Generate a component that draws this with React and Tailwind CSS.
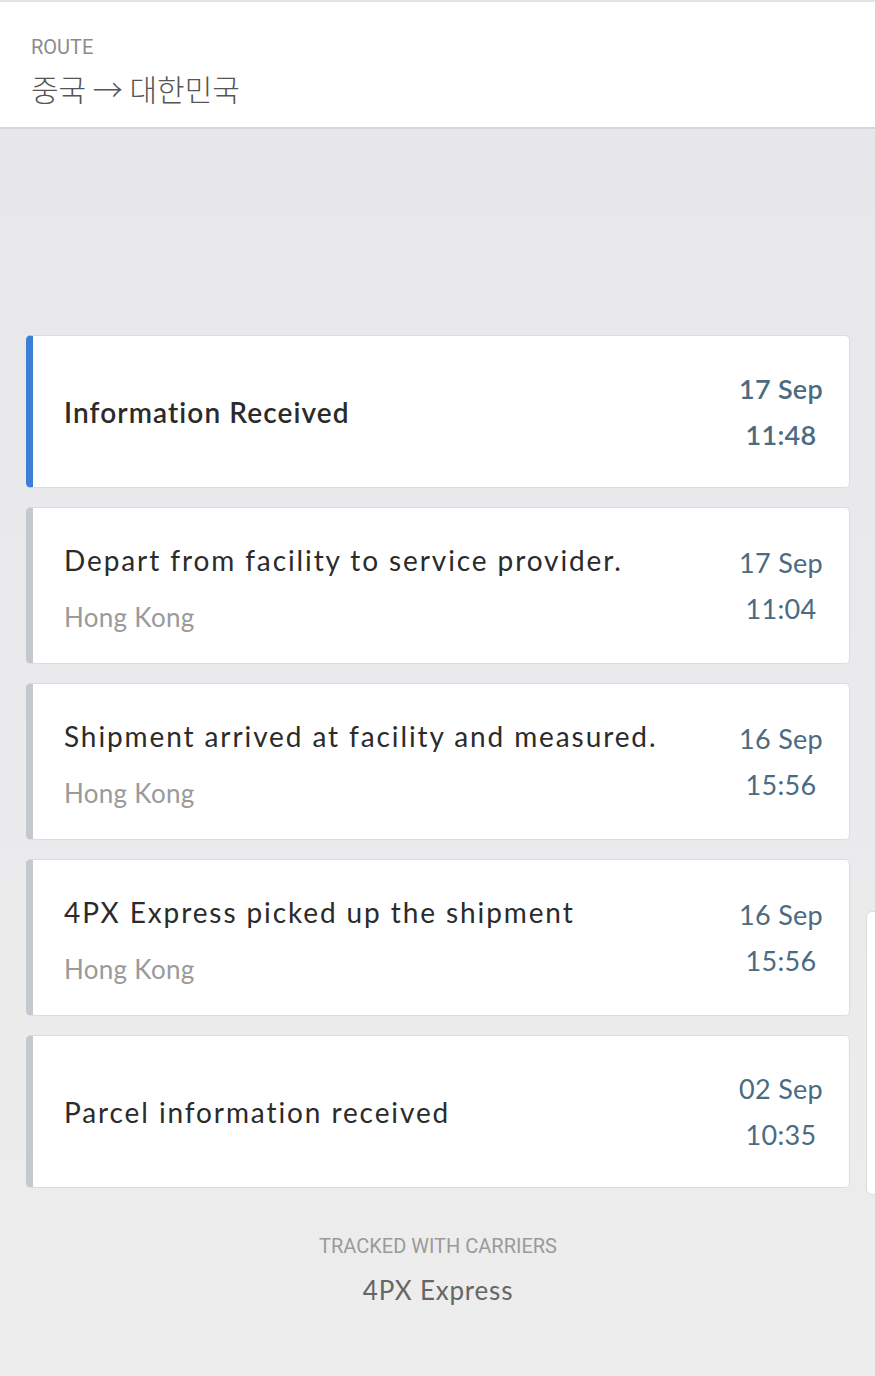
const events = [
  { title: "Information Received", place: null, date: "17 Sep", time: "11:48", active: true },
  { title: "Depart from facility to service provider.", place: "Hong Kong", date: "17 Sep", time: "11:04" },
  { title: "Shipment arrived at facility and measured.", place: "Hong Kong", date: "16 Sep", time: "15:56" },
  { title: "4PX Express picked up the shipment", place: "Hong Kong", date: "16 Sep", time: "15:56" },
  { title: "Parcel information received", place: null, date: "02 Sep", time: "10:35" },
];

const EventCard = ({ ev }) => (
  <div
    className={`flex items-center rounded-[5px] bg-white border border-[#dcdcdc] border-l-[7px] ${
      ev.active ? "border-l-[#3b80d6]" : "border-l-[#c3c9ce]"
    } ${ev.place ? "h-[157px]" : "h-[153px]"}`}
  >
    <div className={`flex-1 pl-[31px] ${ev.place ? "pt-[4px]" : ""}`}>
      <div
        className={`text-[28px] leading-[36px] text-[#2b2b2b] ${
          ev.active ? "font-semibold tracking-[1.1px]" : "tracking-[1.9px]"
        }`}
      >
        {ev.title}
      </div>
      {ev.place && <div className="mt-[22px] text-[26px] leading-[34px] tracking-[0.3px] text-[#9a9a9a]">{ev.place}</div>}
    </div>
    <div
      className={`w-[136px] text-center text-[27px] leading-[46px] tracking-[0.3px] text-[#4b6b82] ${ev.active ? "font-semibold" : ""}`}
    >
      <div>{ev.date}</div>
      <div>{ev.time}</div>
    </div>
  </div>
);

export default function App() {
  return (
    <div className="relative min-h-[1376px] overflow-hidden bg-gradient-to-b from-[#e7e7eb] to-[#ededed]" style={{ fontFamily: "Lato, 'Noto Sans', sans-serif" }}>
      <header className="h-[129px] bg-white border-t-2 border-t-[#e4e4e4] border-b-2 border-b-[#d6d6da] px-[31px] pt-[32px]">
        <div className="text-[20px] leading-[26px] text-[#8c8c8c]" style={{ fontFamily: "Roboto, sans-serif" }}>
          ROUTE
        </div>
        <div
          className="mt-[8px] text-[30px] leading-[40px] text-[#555] font-light"
          style={{ fontFamily: "'Noto Sans CJK KR', sans-serif" }}
        >
          중국 → 대한민국
        </div>
      </header>

      <main className="px-[26px] pt-[206px] pr-[25px]">
        <div className="flex flex-col gap-[19px]">
          {events.map((ev, i) => (
            <EventCard key={i} ev={ev} />
          ))}
        </div>

        <div className="mt-[45px] text-center">
          <div className="text-[20px] leading-[26px] text-[#9a9a9a]" style={{ fontFamily: "Roboto, sans-serif" }}>
            TRACKED WITH CARRIERS
          </div>
          <div className="mt-[15px] text-[26px] leading-[32px] tracking-[0.8px] text-[#666]">4PX Express</div>
        </div>
      </main>

      <div className="absolute left-[866px] top-[911px] w-[30px] h-[284px] rounded-[6px] bg-white border border-[#dcdcdc]" />
    </div>
  );
}
